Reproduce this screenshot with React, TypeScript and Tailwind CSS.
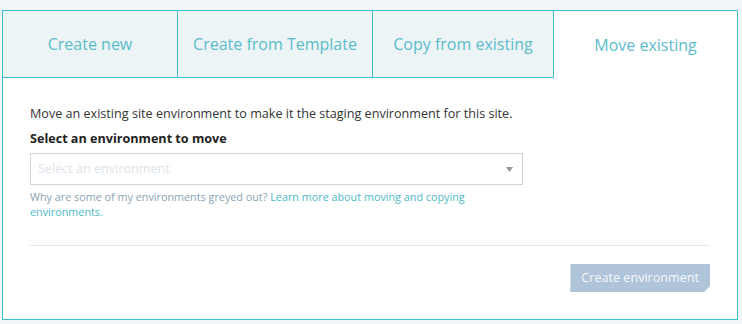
const tabs = [
  { label: 'Create new', width: 'w-[174px]', active: false },
  { label: 'Create from Template', width: 'w-[195px]', active: false },
  { label: 'Copy from existing', width: 'w-[182px]', active: false },
  { label: 'Move existing', width: 'flex-1', active: true },
];

export default function App() {
  return (
    <div className="min-h-[324px] w-[742px] bg-[#f3f6f8] pt-[10px] pl-[2px] font-['Open_Sans',sans-serif]">
      <div className="w-[736px] h-[310px] border border-[#3dbdcd] bg-white flex flex-col">
        <div className="flex h-[67px]">
          {tabs.map((tab, i) => (
            <div
              key={tab.label}
              className={`${tab.width} flex items-center justify-center text-[16px] text-[#5bbccb] ${
                tab.active
                  ? 'bg-white'
                  : `bg-[#edf4f6] border-b border-[#3dbdcd] ${i > 0 ? 'border-l' : ''} ${i === 2 ? 'border-r' : ''}`
              }`}
            >
              {tab.label}
            </div>
          ))}
        </div>

        <div className="px-[27px] pt-[27px] text-[12.6px]">
          <p className="text-[#333] leading-[18px]">
            Move an existing site environment to make it the staging environment for this site.
          </p>
          <h4 className="mt-[7px] font-bold text-[#222] leading-[18px]">Select an environment to move</h4>
          <div className="mt-[5px] w-[493px] h-[32px] border border-[#d4d4d4] flex items-center justify-between pl-[7px] pr-[9px]">
            <span className="text-[#dce3ea]">Select an environment</span>
            <svg width="7" height="5" viewBox="0 0 7 5">
              <path d="M0 0 L7 0 L3.5 5 Z" fill="#999" />
            </svg>
          </div>
          <p className="mt-[4px] text-[10.8px] leading-[15px] text-[#8aa3b5] w-[470px]">
            Why are some of my environments greyed out?{' '}
            <a className="text-[#4cb9c9]">Learn more about moving and copying environments.</a>
          </p>
          <div className="mt-[26px] h-px bg-[#e3e9ee] w-[680px]" />
          <div className="flex justify-end w-[680px] mt-[18px]">
            <button
              className="h-[28px] px-[11px] bg-[#afc4d8] text-[#f4f8fb] text-[12.6px] [clip-path:polygon(0_0,100%_0,100%_calc(100%-6px),calc(100%-6px)_100%,0_100%)]"
            >
              Create environment
            </button>
          </div>
        </div>
      </div>
    </div>
  );
}
